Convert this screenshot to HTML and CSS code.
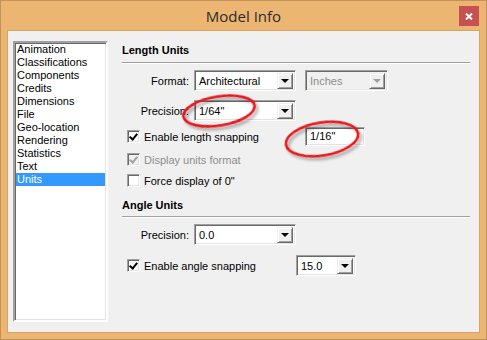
FILE: index.html
```html
<!DOCTYPE html>
<html>
<head>
<meta charset="utf-8">
<link rel="stylesheet" href="styles.css">
</head>
<body>
<div class="window">
  <div class="titlebar">
    <span></span>
    <span class="title">Model Info</span>
    <span class="close"><svg width="8" height="7" viewBox="0 0 8 7"><path d="M1 0.5 L7 6.5 M7 0.5 L1 6.5" stroke="#fff" stroke-width="2"/></svg></span>
  </div>
  <div class="client">
    <ul class="listbox">
      <li>Animation</li>
      <li>Classifications</li>
      <li>Components</li>
      <li>Credits</li>
      <li>Dimensions</li>
      <li>File</li>
      <li>Geo-location</li>
      <li>Rendering</li>
      <li>Statistics</li>
      <li>Text</li>
      <li class="sel">Units</li>
    </ul>
    <div class="panel">
      <div class="hdr">Length Units</div>
      <div class="sep"></div>
      <div class="row r-format">
        <span class="lbl">Format:</span>
        <span class="combo w102"><span class="val">Architectural</span><span class="btn"><i></i></span></span>
        <span class="combo w83 disabled"><span class="val">Inches</span><span class="btn"><i></i></span></span>
      </div>
      <div class="row r-prec">
        <span class="lbl">Precision:</span>
        <span class="combo w102"><span class="val">1/64"</span><span class="btn"><i></i></span></span>
      </div>
      <div class="row r-c1">
        <span class="chk on"></span><span class="ctext w161">Enable length snapping</span>
        <span class="edit">1/16"</span>
      </div>
      <div class="row r-c2">
        <span class="chk on dis"></span><span class="ctext grey">Display units format</span>
      </div>
      <div class="row r-c3">
        <span class="chk"></span><span class="ctext">Force display of 0"</span>
      </div>
      <div class="hdr h2">Angle Units</div>
      <div class="sep s2"></div>
      <div class="row r-prec2">
        <span class="lbl">Precision:</span>
        <span class="combo w102"><span class="val">0.0</span><span class="btn"><i></i></span></span>
      </div>
      <div class="row r-snap">
        <span class="chk on"></span><span class="ctext w152">Enable angle snapping</span>
        <span class="combo w60"><span class="val">15.0</span><span class="btn"><i></i></span></span>
      </div>
    </div>
  </div>
  <svg class="marks" width="487" height="340" viewBox="0 0 487 340">
    <defs>
      <filter id="sh" x="-20%" y="-20%" width="140%" height="160%">
        <feDropShadow dx="2" dy="3" stdDeviation="1.6" flood-color="#000" flood-opacity="0.35"/>
      </filter>
    </defs>
    <ellipse cx="219" cy="111" rx="36" ry="14.5" transform="rotate(-9 219 111)" fill="none" stroke="#e8141a" stroke-width="2.6" filter="url(#sh)"/>
    <ellipse cx="322" cy="139" rx="36.5" ry="16.5" transform="rotate(-9 322 139)" fill="none" stroke="#e8141a" stroke-width="2.6" filter="url(#sh)"/>
  </svg>
</div>
</body>
</html>
```
FILE: styles.css
```css
* { box-sizing: border-box; }
html, body { margin: 0; padding: 0; }
body { width: 487px; height: 340px; overflow: hidden; background: #fff; }

.window {
  position: relative;
  width: 487px;
  height: 340px;
  background: #ecb672;
  border: 1px solid #c1925a;
  font-family: "Liberation Sans", Arial, sans-serif;
  font-size: 11px;
  color: #000;
}

.titlebar {
  height: 29px;
  display: grid;
  grid-template-columns: 1fr auto 1fr;
  align-items: start;
}
.title {
  font-family: "Open Sans", "Noto Sans", sans-serif;
  font-size: 15px;
  line-height: 28px;
  color: #2b2b2b;
  padding-top: 1px;
}
.close {
  justify-self: end;
  margin: 5px 7px 0 0;
  width: 20px;
  height: 20px;
  background: #c75050;
  display: flex;
  align-items: center;
  justify-content: center;
}

.client {
  margin: 0 6px 0 6px;
  height: 303px;
  background: #f0f0f0;
  border: 1px solid #d6a467;
  display: flex;
  align-items: flex-start;
  padding: 10px 0 0 5px;
}

.listbox {
  list-style: none;
  margin: 0;
  padding: 0;
  width: 95px;
  height: 281px;
  background: #fff;
  border-style: solid;
  border-width: 2px;
  border-color: #a0a0a0 #fff #fff #a0a0a0;
  box-shadow: inset 1px 1px 0 #696969, inset -1px -1px 0 #e3e3e3;
  padding: 0 1px;
}
.listbox li {
  height: 13px;
  line-height: 13px;
  padding-left: 1px;
  white-space: nowrap;
}
.listbox li.sel { background: #3399ff; color: #fff; }

.panel {
  margin-left: 14px;
  padding-top: 2px;
  width: 350px;
  display: flex;
  flex-direction: column;
}
.hdr {
  height: 14px;
  line-height: 14px;
  font-weight: bold;
}
.sep {
  margin-top: 5px;
  height: 2px;
  width: 348px;
  border-top: 1px solid #a0a0a0;
  border-bottom: 1px solid #fff;
}
.h2 { margin-top: 11px; }
.s2 { margin-top: 4px; }

.row { display: flex; align-items: center; }
.r-format { margin-top: 6px; height: 21px; }
.r-prec { margin-top: 9px; height: 21px; }
.r-c1 { margin-top: 6px; height: 19px; }
.r-c2 { margin-top: 7px; height: 13px; }
.r-c3 { margin-top: 8px; height: 13px; }
.r-prec2 { margin-top: 6px; height: 21px; }
.r-snap { margin-top: 10px; height: 21px; }

.lbl {
  width: 67px;
  text-align: right;
  margin-right: 5px;
}

.combo {
  height: 21px;
  background: #fff;
  border-style: solid;
  border-width: 1px;
  border-color: #a0a0a0 #fff #fff #a0a0a0;
  box-shadow: inset 1px 1px 0 #696969, inset -1px -1px 0 #e3e3e3;
  display: flex;
  align-items: center;
  padding: 2px 2px 2px 4px;
}
.combo .val { flex: 1; white-space: nowrap; }
.combo.disabled { background: #f0f0f0; margin-left: 9px; }
.combo.disabled .val { color: #8d8d8d; }
.w102 { width: 102px; }
.w83 { width: 83px; }
.w60 { width: 60px; }

.btn {
  width: 16px;
  height: 16px;
  background: #f0f0f0;
  border-style: solid;
  border-width: 1px;
  border-color: #f0f0f0 #696969 #696969 #f0f0f0;
  box-shadow: inset 1px 1px 0 #fff, inset -1px -1px 0 #a0a0a0;
  display: flex;
  align-items: center;
  justify-content: center;
}
.btn i {
  width: 0;
  height: 0;
  border-left: 4px solid transparent;
  border-right: 4px solid transparent;
  border-top: 4px solid #000;
  margin-top: 1px;
}
.disabled .btn i { border-top-color: #a0a0a0; }

.chk {
  width: 13px;
  height: 13px;
  margin-left: 5px;
  background: #fff;
  border-style: solid;
  border-width: 1px;
  border-color: #a0a0a0 #fff #fff #a0a0a0;
  box-shadow: inset 1px 1px 0 #696969, inset -1px -1px 0 #e3e3e3;
  position: relative;
  flex: none;
}
.chk.on::after {
  content: "";
  position: absolute;
  top: 1px;
  left: 3px;
  width: 3px;
  height: 6px;
  border-right: 2px solid #000;
  border-bottom: 2px solid #000;
  transform: rotate(40deg);
  transform-origin: 50% 50%;
}
.chk.dis { background: #f0f0f0; }
.chk.dis::after { border-color: #a0a0a0; }

.ctext { margin-left: 4px; white-space: nowrap; }
.ctext.grey { color: #8d8d8d; }
.w161 { width: 161px; }
.w152 { width: 152px; }

.edit {
  width: 60px;
  height: 19px;
  background: #fff;
  border-style: solid;
  border-width: 1px;
  border-color: #a0a0a0 #fff #fff #a0a0a0;
  box-shadow: inset 1px 1px 0 #696969, inset -1px -1px 0 #e3e3e3;
  padding: 0 0 0 4px;
  line-height: 17px;
}

.marks { position: absolute; left: -1px; top: -1px; pointer-events: none; }
```
